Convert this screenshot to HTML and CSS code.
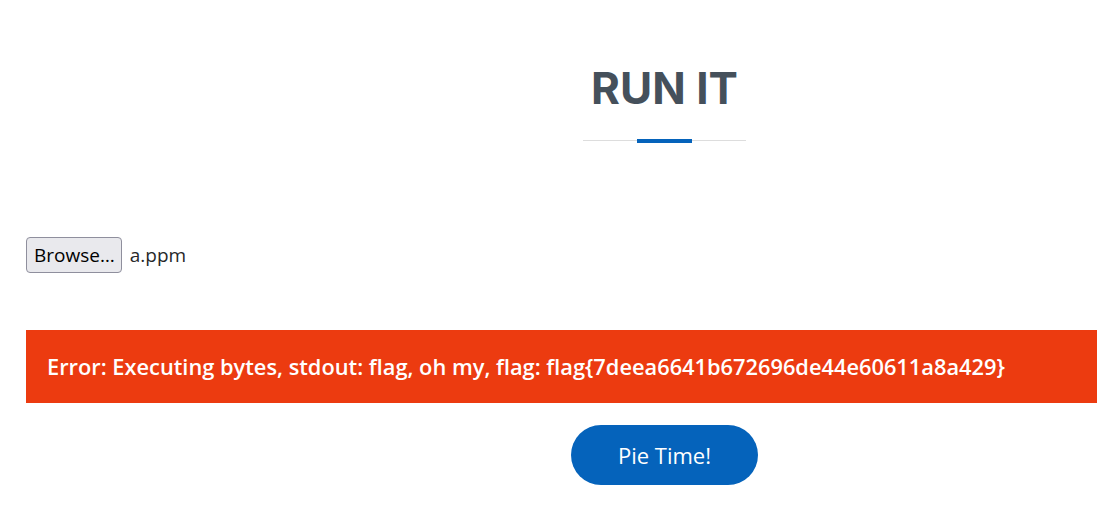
FILE: index.html
```html
<!DOCTYPE html>
<html>
<head>
<meta charset="utf-8">
<link rel="stylesheet" href="styles.css">
</head>
<body>
<main class="page">
  <section class="title-block">
    <h2 class="title">RUN IT</h2>
    <div class="divider"><span class="divider-accent"></span></div>
  </section>
  <div class="file-row">
    <button class="browse" type="button">Browse…</button>
    <span class="file-name">a.ppm</span>
  </div>
  <div class="error">Error: Executing bytes, stdout: flag, oh my, flag: flag{7deea6641b672696de44e60611a8a429}</div>
  <div class="actions">
    <button class="pie" type="button">Pie Time!</button>
  </div>
</main>
</body>
</html>
```
FILE: styles.css
```css
html, body {
  margin: 0;
  padding: 0;
  overflow: hidden;
  background: #fff;
}
.page {
  width: 1277px;
  margin-left: 26px;
  font-family: "Open Sans", "Noto Sans", sans-serif;
  color: #272829;
}
.title-block {
  display: flex;
  flex-direction: column;
  align-items: center;
  padding-top: 60px;
}
.title {
  margin: 0;
  font-family: "Inter", "Open Sans", sans-serif;
  font-weight: 700;
  font-size: 44px;
  line-height: 56px;
  color: #45505b;
}
.divider {
  position: relative;
  width: 163px;
  height: 1px;
  background: #dddddd;
  margin-top: 24px;
  display: flex;
  justify-content: center;
}
.divider-accent {
  position: absolute;
  top: -1px;
  width: 55px;
  height: 4px;
  background: #0563bb;
}
.file-row {
  display: flex;
  align-items: center;
  gap: 8px;
  margin-top: 96px;
}
.browse {
  font-family: "Open Sans", "Noto Sans", sans-serif;
  font-size: 19px;
  color: #000;
  background: #e9e9ed;
  border: 1px solid #8f8f9d;
  border-radius: 4px;
  height: 36px;
  padding: 0 6px 0 7px;
}
.file-name {
  font-size: 19px;
  color: #272829;
}
.error {
  margin-top: 57px;
  background: #ec3b10;
  color: #fff;
  font-weight: 600;
  font-size: 21.8px;
  height: 73px;
  display: flex;
  align-items: center;
  padding-left: 21px;
}
.actions {
  display: flex;
  justify-content: center;
  margin-top: 22px;
}
.pie {
  font-family: "Open Sans", sans-serif;
  font-size: 22px;
  color: #fff;
  background: #0563bb;
  border: none;
  border-radius: 30px;
  width: 187px;
  height: 60px;
}
```
